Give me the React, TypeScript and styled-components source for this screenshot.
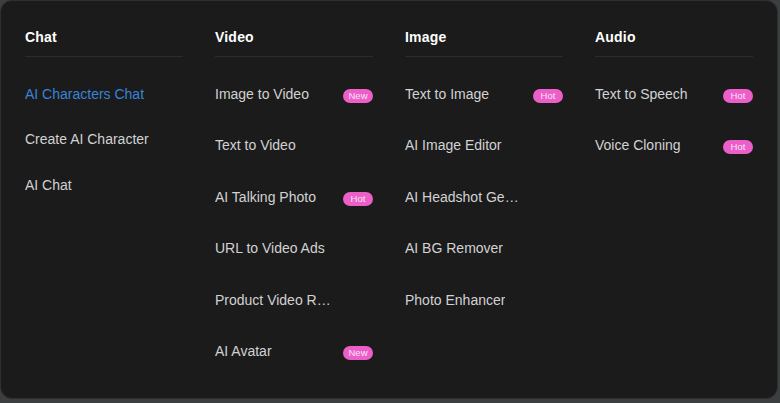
import React from "react";
import styled, { createGlobalStyle } from "styled-components";

type Item = {
  label: string;
  badge?: "New" | "Hot";
  active?: boolean;
};

type Group = {
  title: string;
  rowHeight: number;
  offset: number;
  clip: boolean;
  items: Item[];
};

const groups: Group[] = [
  {
    title: "Chat",
    rowHeight: 45.5,
    offset: 14,
    clip: false,
    items: [
      { label: "AI Characters Chat", active: true },
      { label: "Create AI Character" },
      { label: "AI Chat" },
    ],
  },
  {
    title: "Video",
    rowHeight: 51.5,
    offset: 11,
    clip: true,
    items: [
      { label: "Image to Video", badge: "New" },
      { label: "Text to Video" },
      { label: "AI Talking Photo", badge: "Hot" },
      { label: "URL to Video Ads" },
      { label: "Product Video Reels" },
      { label: "AI Avatar", badge: "New" },
    ],
  },
  {
    title: "Image",
    rowHeight: 51.5,
    offset: 11,
    clip: true,
    items: [
      { label: "Text to Image", badge: "Hot" },
      { label: "AI Image Editor" },
      { label: "AI Headshot Generator" },
      { label: "AI BG Remover" },
      { label: "Photo Enhancer" },
    ],
  },
  {
    title: "Audio",
    rowHeight: 51.5,
    offset: 11,
    clip: true,
    items: [
      { label: "Text to Speech", badge: "Hot" },
      { label: "Voice Cloning", badge: "Hot" },
    ],
  },
];

const GlobalStyle = createGlobalStyle`
  html, body {
    margin: 0;
    padding: 0;
    background: #3b3f3f;
  }
  body {
    font-family: "Liberation Sans", Arial, sans-serif;
  }
`;

const Panel = styled.div`
  box-sizing: border-box;
  width: 778px;
  height: 399px;
  background: #1b1b1c;
  border: 1px solid #2f2f31;
  border-radius: 12px;
  padding: 27px 24px 0 24px;
  display: grid;
  grid-template-columns: repeat(4, 158px);
  column-gap: 32px;
`;

const Column = styled.div`
  display: flex;
  flex-direction: column;
`;

const Heading = styled.div`
  font-size: 14px;
  font-weight: 700;
  line-height: 18px;
  color: #ffffff;
  letter-spacing: 0.2px;
  padding-bottom: 10px;
  border-bottom: 1px solid #2c2c2e;
`;

const List = styled.ul<{ $offset: number }>`
  list-style: none;
  margin: 0;
  padding: ${({ $offset }) => $offset}px 0 0 0;
`;

const Row = styled.li<{ $height: number }>`
  height: ${({ $height }) => $height}px;
  display: flex;
  align-items: center;
  justify-content: space-between;
`;

const Label = styled.span<{ $active?: boolean; $clip: boolean }>`
  max-width: ${({ $clip }) => ($clip ? "118px" : "none")};
  font-size: 14px;
  line-height: 16px;
  color: ${({ $active }) => ($active ? "#3a83d6" : "#d2d2d2")};
  white-space: nowrap;
  overflow: hidden;
  text-overflow: ellipsis;
`;

const Badge = styled.span`
  width: 30px;
  height: 14px;
  margin-top: 4px;
  border-radius: 7px;
  background: #ec5fc8;
  color: #fbe3f4;
  font-size: 9.5px;
  line-height: 14px;
  text-align: center;
`;

export default function App() {
  return (
    <>
      <GlobalStyle />
      <Panel>
        {groups.map((group) => (
          <Column key={group.title}>
            <Heading>{group.title}</Heading>
            <List $offset={group.offset}>
              {group.items.map((item) => (
                <Row key={item.label} $height={group.rowHeight}>
                  <Label $active={item.active} $clip={group.clip}>
                    {item.label}
                  </Label>
                  {item.badge && <Badge>{item.badge}</Badge>}
                </Row>
              ))}
            </List>
          </Column>
        ))}
      </Panel>
    </>
  );
}
